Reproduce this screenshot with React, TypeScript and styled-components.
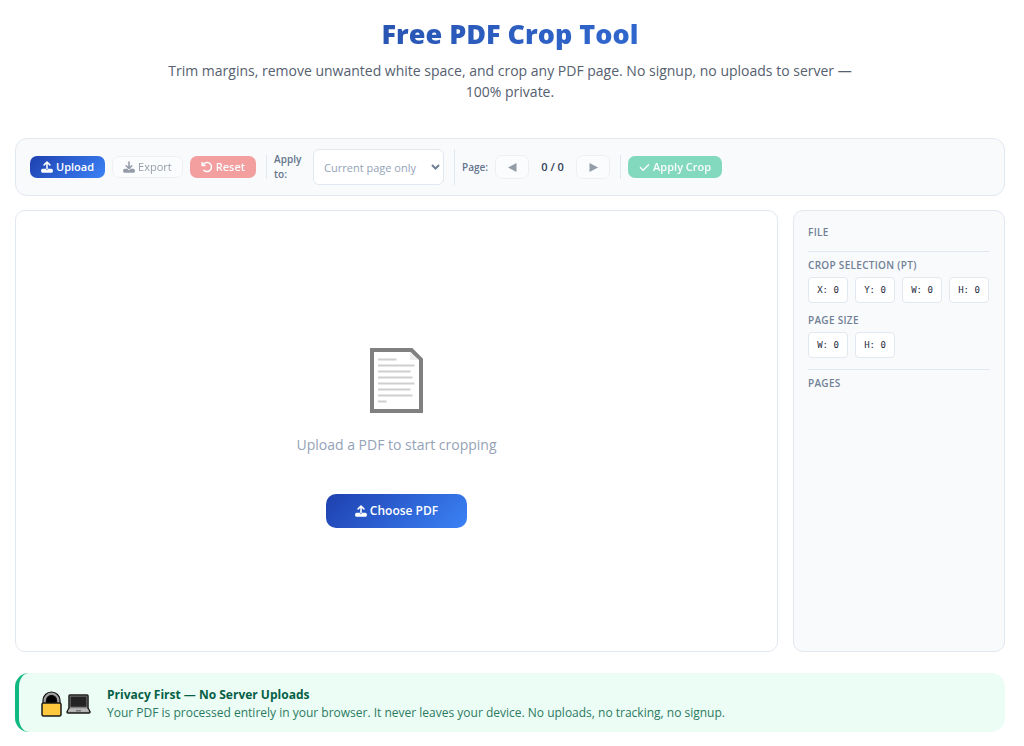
import React from 'react';
import styled, { createGlobalStyle, css } from 'styled-components';
import { FaArrowRotateLeft, FaCheck } from 'react-icons/fa6';

const GlobalStyle = createGlobalStyle`
  *, *::before, *::after { box-sizing: border-box; }
  body {
    margin: 0;
    background: #fff;
    color: #1e293b;
    font-family: "Segoe UI", "Open Sans", "Noto Sans", sans-serif;
  }
  button, select { font-family: inherit; }
`;

const Page = styled.div`
  padding: 16px 19px 14px 15px;
`;

const Header = styled.header`
  display: flex;
  flex-direction: column;
  gap: 8px;
  padding-bottom: 36px;
  text-align: center;
`;

const Title = styled.h1`
  margin: 0;
  font-size: 27px;
  font-weight: 800;
  line-height: 36px;
  background: linear-gradient(135deg, #1e3a8a, #3b82f6);
  background-clip: text;
  -webkit-background-clip: text;
  color: transparent;
`;

const Subtitle = styled.p`
  max-width: 700px;
  margin: 0 auto;
  color: #56606f;
  font-size: 14px;
  line-height: 21px;
`;

const Toolbar = styled.div`
  display: flex;
  align-items: center;
  gap: 7px;
  min-height: 58px;
  padding: 10px 14px;
  border: 1px solid #e2e8f0;
  border-radius: 12px;
  background: #f8fafc;
`;

const Group = styled.div<{ $last?: boolean }>`
  display: flex;
  align-items: center;
  gap: 7px;
  min-height: 24px;
  ${(p) =>
    !p.$last &&
    css`
      padding-right: 10px;
      border-right: 1px solid #e2e8f0;
    `}
`;

type Tone = 'primary' | 'plain' | 'danger' | 'success';

const tones = {
  primary: css`
    background: linear-gradient(135deg, #1e40af, #3b82f6) border-box;
    color: #fff;
  `,
  plain: css`
    background: #fff;
    border-color: #e2e8f0;
    color: #334155;
    font-weight: 500;
  `,
  danger: css`
    background: #ef4444;
    color: #fff;
  `,
  success: css`
    background: #10b981;
    color: #fff;
  `,
};

const Button = styled.button<{ $tone: Tone; $size?: 'large' }>`
  display: inline-flex;
  align-items: center;
  justify-content: center;
  gap: 3px;
  height: 22px;
  padding: 0 10px;
  border: 1px solid transparent;
  border-radius: 7px;
  font-size: 11px;
  font-weight: 600;
  line-height: 16px;
  white-space: nowrap;
  ${(p) => tones[p.$tone]}
  &:disabled { opacity: 0.5; }
  ${(p) =>
    p.$size === 'large' &&
    css`
      height: 34px;
      padding: 0 28px;
      border-radius: 10px;
      font-size: 12px;
    `}
`;

const StepButton = styled(Button)`
  width: 34px;
  height: 24px;
  padding: 0;
`;

const FieldLabel = styled.label<{ $narrow?: boolean }>`
  width: ${(p) => (p.$narrow ? '32px' : 'auto')};
  color: #64748b;
  font-size: 10px;
  font-weight: 600;
  line-height: 15px;
`;

const SelectWrap = styled.div`
  display: grid;
  align-items: center;
  > * { grid-area: 1 / 1; }
  svg {
    justify-self: end;
    margin-right: 4px;
    pointer-events: none;
  }
`;

const Select = styled.select`
  appearance: none;
  width: 131px;
  height: 36px;
  padding: 0 20px 0 10px;
  border: 1px solid #e2e8f0;
  border-radius: 6px;
  background: #fff;
  color: #94a3b8;
  font-size: 11px;
  opacity: 1;
`;

const PageCount = styled.span`
  min-width: 33px;
  color: #334155;
  font-size: 11px;
  font-weight: 600;
  line-height: 16px;
  text-align: center;
`;

const Workspace = styled.main`
  display: grid;
  grid-template-columns: minmax(0, 1fr) 212px;
  gap: 15px;
  min-height: 442px;
  margin: 14px 0 21px;
`;

const Canvas = styled.section`
  display: flex;
  flex-direction: column;
  align-items: center;
  justify-content: center;
  padding-top: 14px;
  border: 1px solid #e2e8f0;
  border-radius: 10px;
  background: #fff;
`;

const Hint = styled.p`
  margin: 21px 0 38px;
  color: #94a3b8;
  font-size: 14px;
  line-height: 22px;
`;

const Sidebar = styled.aside`
  padding: 14px;
  border: 1px solid #e2e8f0;
  border-radius: 10px;
  background: #f8fafc;
`;

const Block = styled.section<{ $line?: boolean }>`
  padding-bottom: 10px;
  ${(p) =>
    p.$line &&
    css`
      padding-bottom: 11px;
      margin-bottom: 6px;
      border-bottom: 1px solid #e2e8f0;
    `}
`;

const BlockTitle = styled.h2`
  margin: 0;
  color: #718096;
  font-size: 10px;
  font-weight: 600;
  line-height: 15px;
  letter-spacing: 0.03em;
  text-transform: uppercase;
`;

const Chips = styled.div`
  display: flex;
  gap: 7px;
  margin-top: 4px;
`;

const Chip = styled.span`
  width: 40px;
  padding: 4px 0;
  border: 1px solid #e2e8f0;
  border-radius: 4px;
  background: #fff;
  color: #1e293b;
  font-family: "DejaVu Sans Mono", monospace;
  font-size: 9px;
  line-height: 16px;
  text-align: center;
`;

const Privacy = styled.footer`
  display: flex;
  align-items: center;
  gap: 16px;
  padding: 13px 22px 10px;
  border-left: 4px solid #10b981;
  border-radius: 14px;
  background: #ecfdf5;
  color: #065f46;
`;

const Emojis = styled.div`
  display: flex;
  align-items: center;
  gap: 4px;
`;

const PrivacyTitle = styled.strong`
  display: block;
  font-size: 12px;
  font-weight: 700;
  line-height: 18px;
`;

const PrivacyText = styled.p`
  margin: 0;
  color: #2b7a62;
  font-size: 12px;
  line-height: 18px;
`;

const TrayIcon = ({ children }: { children: React.ReactNode }) => (
  <svg width="12" height="12" viewBox="0 0 13 13" fill="currentColor" aria-hidden="true">
    <path
      fillRule="evenodd"
      d="M1.800 8.500h3.500v.3a1.200 1.200 0 0 0 2.400 0v-.3h3.500a1.700 1.700 0 0 1 1.700 1.700v.8a1.700 1.700 0 0 1-1.700 1.700H1.800A1.700 1.700 0 0 1 .1 11v-.8a1.700 1.700 0 0 1 1.700-1.700z"
    />
    <g fill="none" stroke="currentColor" strokeWidth="1.700" strokeLinecap="round" strokeLinejoin="round">
      {children}
    </g>
  </svg>
);

const UploadIcon = () => (
  <TrayIcon>
    <path d="M6.500 8.700V1.200M3.400 4.200l3.100-3.100 3.100 3.100" />
  </TrayIcon>
);

const DownloadIcon = () => (
  <TrayIcon>
    <path d="M6.500 1v7M3.500 5.100l3 3 3-3" />
  </TrayIcon>
);

const Arrow = ({ back }: { back?: boolean }) => (
  <svg width="9" height="9" viewBox="0 0 9 9" fill="currentColor" aria-hidden="true">
    <path d={back ? 'M8.500 0v9L0 4.500z' : 'M.5 0v9L9 4.500z'} />
  </svg>
);

const Chevron = () => (
  <svg width="9" height="6" viewBox="0 0 9 6" fill="none" stroke="#718096" strokeWidth="2" aria-hidden="true">
    <path d="M1 1l3.500 3.500L8 1" />
  </svg>
);

const DocumentArt = () => (
  <svg width="53" height="65" viewBox="0 0 53 65" aria-hidden="true">
    <path d="M2 2h39.500L51 11.500V63H2z" fill="#fff" stroke="#808080" strokeWidth="4" />
    <path d="M40 4v8h9z" fill="#ededed" />
    <path
      d="M8 11.500h18.500M8 17.500h36.500M8 23.500h32.500M8 29.500h34.500M8 35.500h36.500M8 41.500h32.500M8 47.500h34.500M8 53.500h8.500"
      stroke="#cfcfcf"
      strokeWidth="2"
    />
  </svg>
);

const LockArt = () => (
  <svg width="21" height="26" viewBox="0 0 21 26" aria-hidden="true">
    <path d="M3 13V9.500a7.500 7.500 0 0 1 15 0V13z" fill="#000" />
    <path d="M3.700 12.500V9.500a6.800 6.800 0 0 1 13.600 0v3" fill="none" stroke="#111" strokeWidth="4.600" />
    <path d="M3.700 12.500V9.500a6.800 6.800 0 0 1 13.600 0v3" fill="none" stroke="#a0a0a0" strokeWidth="2.200" />
    <rect x="1" y="12" width="19" height="13" rx="1.500" fill="#ffc83d" stroke="#1a1a1a" strokeWidth="1.500" />
  </svg>
);

const LaptopArt = () => (
  <svg width="25" height="20" viewBox="0 0 25 20" aria-hidden="true">
    <path d="M4 1h17a1 1 0 0 1 1 1v12l2 4a1 1 0 0 1-1 1H2a1 1 0 0 1-1-1l2-4V2a1 1 0 0 1 1-1z" fill="#a8a8a8" stroke="#1a1a1a" strokeWidth="1.500" />
    <path d="M4.500 2.500h16V13h-16z" fill="#242424" stroke="#555" strokeWidth="1" />
    <path d="M3 15h19l1 2.500H2z" fill="#b9b9b9" />
    <path d="M10 16h5v1.500h-5z" fill="#777" />
  </svg>
);

export default function App() {
  return (
    <>
      <GlobalStyle />
      <Page>
        <Header>
          <Title>Free PDF Crop Tool</Title>
          <Subtitle>
            Trim margins, remove unwanted white space, and crop any PDF page. No signup, no uploads to server — 100%
            private.
          </Subtitle>
        </Header>

        <Toolbar role="toolbar" aria-label="Crop tools">
          <Group>
            <Button type="button" $tone="primary"><UploadIcon />Upload</Button>
            <Button type="button" $tone="plain" disabled><DownloadIcon />Export</Button>
            <Button type="button" $tone="danger" disabled><FaArrowRotateLeft size={12} />Reset</Button>
          </Group>
          <Group>
            <FieldLabel htmlFor="scope" $narrow>Apply to:</FieldLabel>
            <SelectWrap>
              <Select id="scope" disabled defaultValue="current">
                <option value="current">Current page only</option>
                <option value="all">All pages</option>
              </Select>
              <Chevron />
            </SelectWrap>
          </Group>
          <Group>
            <FieldLabel as="span">Page:</FieldLabel>
            <StepButton type="button" $tone="plain" disabled aria-label="Previous page"><Arrow back /></StepButton>
            <PageCount>0 / 0</PageCount>
            <StepButton type="button" $tone="plain" disabled aria-label="Next page"><Arrow /></StepButton>
          </Group>
          <Group $last>
            <Button type="button" $tone="success" disabled><FaCheck size={11} />Apply Crop</Button>
          </Group>
        </Toolbar>

        <Workspace>
          <Canvas>
            <DocumentArt />
            <Hint>Upload a PDF to start cropping</Hint>
            <Button type="button" $tone="primary" $size="large"><UploadIcon />Choose PDF</Button>
          </Canvas>
          <Sidebar>
            <Block $line>
              <BlockTitle>File</BlockTitle>
            </Block>
            <Block>
              <BlockTitle>Crop selection (pt)</BlockTitle>
              <Chips><Chip>X: 0</Chip><Chip>Y: 0</Chip><Chip>W: 0</Chip><Chip>H: 0</Chip></Chips>
            </Block>
            <Block $line>
              <BlockTitle>Page size</BlockTitle>
              <Chips><Chip>W: 0</Chip><Chip>H: 0</Chip></Chips>
            </Block>
            <Block>
              <BlockTitle>Pages</BlockTitle>
            </Block>
          </Sidebar>
        </Workspace>

        <Privacy>
          <Emojis><LockArt /><LaptopArt /></Emojis>
          <div>
            <PrivacyTitle>Privacy First — No Server Uploads</PrivacyTitle>
            <PrivacyText>
              Your PDF is processed entirely in your browser. It never leaves your device. No uploads, no tracking, no
              signup.
            </PrivacyText>
          </div>
        </Privacy>
      </Page>
    </>
  );
}
